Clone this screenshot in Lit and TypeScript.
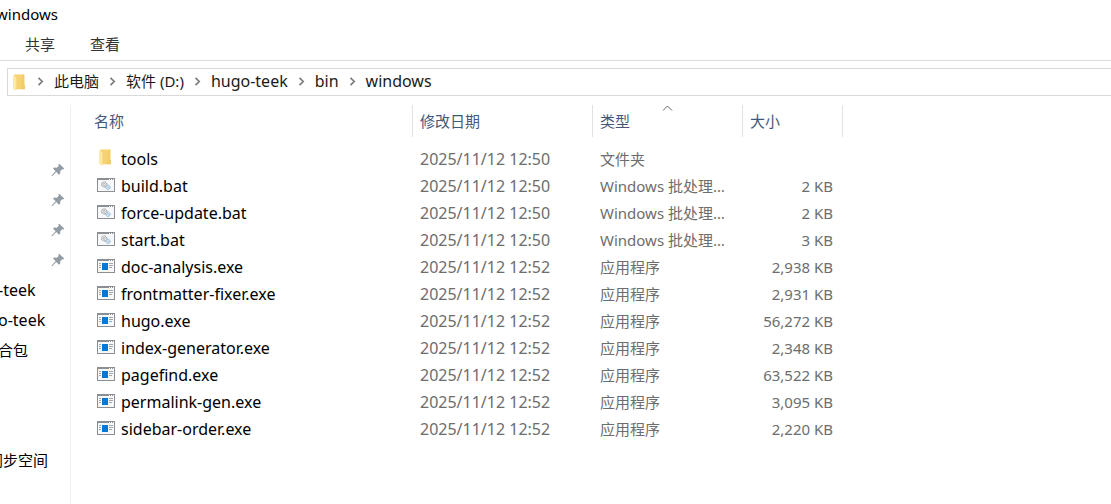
import { LitElement, html, css, svg, nothing } from "lit";
import { customElement } from "lit/decorators.js";
import { classMap } from "lit/directives/class-map.js";

type Kind = "folder" | "bat" | "exe";

interface Entry {
  name: string;
  date: string;
  kind: Kind;
  size?: string;
}

const KIND_LABEL: Record<Kind, string> = {
  folder: "文件夹",
  bat: "Windows 批处理文件",
  exe: "应用程序",
};

const ENTRIES: Entry[] = [
  { name: "tools", date: "2025/11/12 12:50", kind: "folder" },
  { name: "build.bat", date: "2025/11/12 12:50", kind: "bat", size: "2 KB" },
  { name: "force-update.bat", date: "2025/11/12 12:50", kind: "bat", size: "2 KB" },
  { name: "start.bat", date: "2025/11/12 12:50", kind: "bat", size: "3 KB" },
  { name: "doc-analysis.exe", date: "2025/11/12 12:52", kind: "exe", size: "2,938 KB" },
  { name: "frontmatter-fixer.exe", date: "2025/11/12 12:52", kind: "exe", size: "2,931 KB" },
  { name: "hugo.exe", date: "2025/11/12 12:52", kind: "exe", size: "56,272 KB" },
  { name: "index-generator.exe", date: "2025/11/12 12:52", kind: "exe", size: "2,348 KB" },
  { name: "pagefind.exe", date: "2025/11/12 12:52", kind: "exe", size: "63,522 KB" },
  { name: "permalink-gen.exe", date: "2025/11/12 12:52", kind: "exe", size: "3,095 KB" },
  { name: "sidebar-order.exe", date: "2025/11/12 12:52", kind: "exe", size: "2,220 KB" },
];

const PATH = ["此电脑", "软件 (D:)", "hugo-teek", "bin", "windows"];

const isLatin = (text: string) => /^[\x20-\x7e]+$/.test(text);

const folderIcon = html`<svg class="folder" width="12" height="17" viewBox="0 0 12 17" aria-hidden="true">
  <path d="M1 .5h10.3v10.8h.7v4H3z" fill="#f6d273" />
  <path d="M9.5 .5h1.8v10.8h.7v4H8z" fill="#f3cb68" />
  <path d="M0 1l3.4 2.4V17L0 14.8z" fill="#fde8a4" />
</svg>`;

const windowFrame = svg`
  <rect x=".5" y=".5" width="17" height="13" fill="#f7f8f9" stroke="#8b8f94" />
  <path d="M0 0h18v2H0z" fill="#8b8f94" />
  <path d="M12 1h1v1h-1zM14 1h1v1h-1zM16 1h1v1h-1z" fill="#fff" />`;

const batIcon = html`<svg width="18" height="14" viewBox="0 0 18 14" aria-hidden="true">
  ${windowFrame}
  <circle cx="7.2" cy="6.4" r="2.6" fill="#eef0f1" stroke="#858b90" stroke-width="1" stroke-dasharray="1.1 .5" />
  <circle cx="7.2" cy="6.4" r="1" fill="#fff" stroke="#858b90" stroke-width=".6" />
  <circle cx="11" cy="9.3" r="2.1" fill="#e2eff9" stroke="#7ba6c6" stroke-width="1" stroke-dasharray="1.1 .5" />
  <circle cx="11" cy="9.3" r=".7" fill="#fff" stroke="#7ba6c6" stroke-width=".5" />
</svg>`;

const exeIcon = html`<svg width="18" height="14" viewBox="0 0 18 14" aria-hidden="true">
  ${windowFrame}
  <path d="M2 4h2v1H2zM2 6h2v1H2zM2 8h2v1H2zM12 4h4v1h-4zM12 6h4v1h-4zM12 8h3v1h-3z" fill="#a3a7ab" />
  <path d="M5 4h6v7H5z" fill="#0078d7" />
</svg>`;

const pinIcon = html`<svg width="14" height="14" viewBox="0 0 14 14" aria-hidden="true">
  <path d="M8.2 .8L13.2 5.6 12.2 6.6 11.2 6.2 9.2 8.2 9.3 10.6 8 11.8 5.3 9 1.4 12.9 .4 13.2 .8 12.2 4.6 8.3 2 5.6 3.2 4.5 5.8 4.8 7.8 2.8 7.3 1.8z" fill="#929ca5" />
</svg>`;

const chevron = html`<svg class="chevron" width="7" height="9" viewBox="0 0 7 9" aria-hidden="true">
  <path d="M1.5 .8L5.2 4.5 1.5 8.2" fill="none" stroke="#7c7c7c" stroke-width="1.7" />
</svg>`;

const ICONS = { folder: folderIcon, bat: batIcon, exe: exeIcon };

@customElement("app-root")
export class AppRoot extends LitElement {
  static styles = css`
    :host {
      display: flex;
      flex-direction: column;
      min-height: 100vh;
      overflow: hidden;
      background: #fff;
      color: #000;
      font: 15px/20px "Noto Sans", "Noto Sans CJK SC", sans-serif;
    }
    * { box-sizing: border-box; }
    svg { display: block; flex: none; }
    a { color: inherit; text-decoration: none; }
    button {
      padding: 0;
      border: 0;
      background: none;
      color: inherit;
      font: inherit;
      text-align: left;
    }
    .latin { font-size: 16px; }
    .title {
      height: 30px;
      margin: 0 0 0 -4px;
      padding-top: 4px;
      font-size: 15px;
      font-weight: 400;
    }
    .tabs {
      display: flex;
      gap: 35px;
      height: 31px;
      padding: 0 25px 2px;
      border-bottom: 1px solid #dcdcdc;
      color: #333;
    }
    .address {
      display: flex;
      align-items: center;
      height: 28px;
      margin: 7px 0 0 7px;
      padding-left: 5px;
      border: 1px solid #d9d9d9;
      border-right: 0;
      color: #1a1a1a;
    }
    .crumbs {
      display: flex;
      margin: 0 0 0 2px;
      padding: 0 0 2px;
      list-style: none;
    }
    .crumbs li { display: flex; align-items: center; }
    .chevron { margin: 0 10px; }
    .body { display: flex; flex: 1; }
    .side {
      flex: none;
      width: 71px;
      margin-top: 9px;
      padding-top: 50px;
      border-right: 1px solid #f0f0f0;
      overflow: hidden;
    }
    .side ul { margin: 0; padding: 0; list-style: none; }
    .side li {
      display: flex;
      align-items: center;
      height: 30px;
      white-space: nowrap;
    }
    .side .pinned { justify-content: flex-end; padding-right: 5px; }
    .side .gap { margin-top: 80px; }
    .deep { margin-left: -12px; }
    .half { margin-left: -2px; }
    .files { flex: 1; min-width: 0; padding: 9px 0 0 15px; }
    table {
      width: 757px;
      table-layout: fixed;
      border-collapse: separate;
      border-spacing: 0;
    }
    .c-date { width: 180px; }
    .c-type { width: 150px; }
    .c-size { width: 100px; }
    th {
      position: relative;
      height: 32px;
      padding: 0 0 0 7px;
      border-right: 1px solid #e2e2e2;
      color: #44587a;
      font-weight: 400;
      text-align: left;
    }
    th:first-child { padding-left: 8px; }
    .sort { position: absolute; top: 0; left: 69px; }
    tbody::before { content: ""; display: block; height: 8px; }
    td {
      height: 27px;
      padding: 0 0 0 7px;
      color: #6d6d6d;
      white-space: nowrap;
    }
    td.kind { overflow: hidden; text-overflow: ellipsis; padding-right: 14px; }
    td.size { padding-right: 10px; text-align: right; }
    td.name { padding-left: 11px; color: #000; }
    .file { display: flex; align-items: center; gap: 6px; }
    .icon { display: flex; justify-content: center; width: 18px; padding-bottom: 2px; }
    .icon.is-folder { padding-right: 2px; }
  `;

  render() {
    return html`
      <h1 class="title">windows</h1>
      <nav class="tabs">
        <button type="button">共享</button>
        <button type="button">查看</button>
      </nav>
      <nav class="address">
        ${folderIcon}
        <ol class="crumbs">
          ${PATH.map(
            (part) => html`<li>${chevron}<a class=${classMap({ latin: isLatin(part) })} href="#">${part}</a></li>`
          )}
        </ol>
      </nav>
      <div class="body">
        <nav class="side">
          <ul>
            ${[1, 2, 3, 4].map(() => html`<li class="pinned">${pinIcon}</li>`)}
            <li><a class="latin half" href="#">-teek</a></li>
            <li><a class="latin half" href="#">o-teek</a></li>
            <li><a class="half" href="#">合包</a></li>
            <li class="gap"><a class="deep" href="#">同步空间</a></li>
          </ul>
        </nav>
        <main class="files">
          <table>
            <colgroup>
              <col />
              <col class="c-date" />
              <col class="c-type" />
              <col class="c-size" />
            </colgroup>
            <thead>
              <tr>
                <th scope="col"><button type="button">名称</button></th>
                <th scope="col"><button type="button">修改日期</button></th>
                <th scope="col" aria-sort="ascending">
                  <button type="button">类型</button>
                  <svg class="sort" width="11" height="7" viewBox="0 0 11 7" aria-hidden="true">
                    <path d="M1 5.5L5.5 1 10 5.5" fill="none" stroke="#666" />
                  </svg>
                </th>
                <th scope="col"><button type="button">大小</button></th>
              </tr>
            </thead>
            <tbody>
              ${ENTRIES.map(
                (e) => html`<tr>
                  <td class="name latin">
                    <div class="file">
                      <span class=${classMap({ icon: true, "is-folder": e.kind === "folder" })}>${ICONS[e.kind]}</span>
                      <span>${e.name}</span>
                    </div>
                  </td>
                  <td class="latin">${e.date}</td>
                  <td class="kind">${KIND_LABEL[e.kind]}</td>
                  <td class="size">${e.size ?? nothing}</td>
                </tr>`
              )}
            </tbody>
          </table>
        </main>
      </div>
    `;
  }
}
